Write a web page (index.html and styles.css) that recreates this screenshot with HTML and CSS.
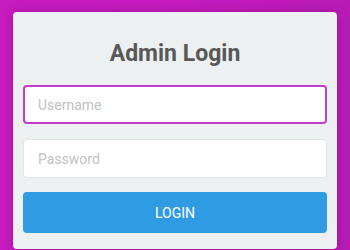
FILE: index.html
```html
<!DOCTYPE html>
<html lang="en">

<head>
    <meta charset="UTF-8">
    <meta name="viewport" content="width=device-width, initial-scale=1.0">
    <title>Admin Login</title>
    <link rel="stylesheet" href="styles.css">
</head>

<body>
    <div class="login-box">
        <h1>Admin Login</h1>

        <form class="login-form">
            <input type="text" class="field focused" placeholder="Username">
            <input type="password" class="field" placeholder="Password">
            <button type="button" class="login-btn">LOGIN</button>
        </form>
    </div>
</body>

</html>
```

FILE: styles.css
```css
body {
    font-family: Roboto, "Open Sans", sans-serif;
    margin: 0;
    padding: 12px 13px 0;
    height: 250px;
    box-sizing: border-box;
    overflow: hidden;
    background: linear-gradient(90deg, #c81cc0 0%, #c41bbd 70%, #b81cb6 100%);
}

.login-box {
    background: #ecf0f1;
    padding: 28px 10px 16px;
    border-radius: 4px;
    box-shadow: 0 0 12px rgba(90, 0, 90, 0.35);
}

h1 {
    margin: 0 0 18px;
    font-size: 23px;
    line-height: 27px;
    font-weight: bold;
    text-align: center;
    color: #585858;
}

.login-form {
    display: flex;
    flex-direction: column;
}

.field {
    height: 39px;
    margin: 0 0 15px;
    padding: 0 14px;
    border: 1px solid #e3e6e8;
    border-radius: 4px;
    background: white;
    font-family: inherit;
    font-size: 14px;
    color: #333;
    outline: none;
    box-sizing: border-box;
}

.field::placeholder {
    color: #bfc2c4;
}

.field.focused {
    border: 2px solid #c23ec6;
    padding: 0 13px;
}

.login-btn {
    height: 41px;
    margin-top: -1px;
    border: none;
    border-radius: 4px;
    background: #2f9be2;
    color: white;
    font-family: inherit;
    font-size: 14px;
    cursor: pointer;
}
```
